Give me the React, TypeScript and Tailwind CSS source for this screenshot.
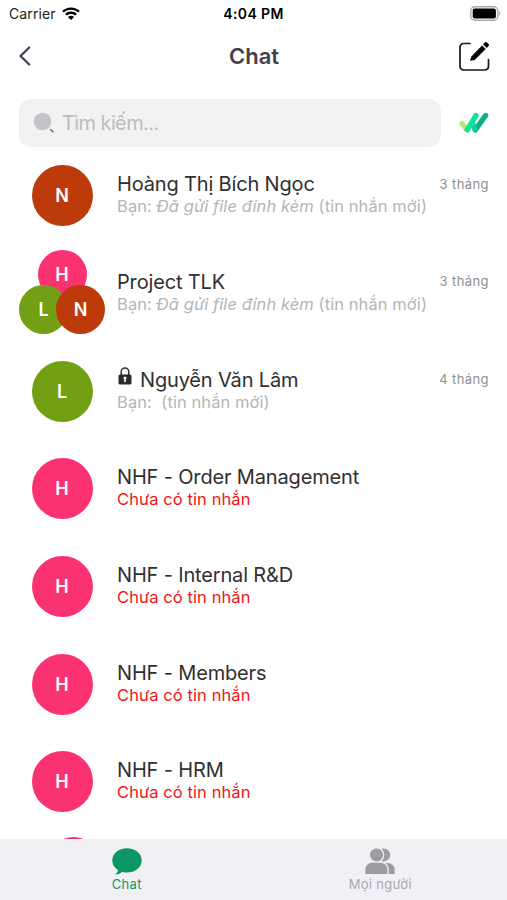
import type { ReactNode } from "react";
import clsx from "clsx";

type Conversation = {
	name: string;
	avatar: ReactNode;
	message?: ReactNode;
	time?: string;
	locked?: boolean;
};

const Avatar = ({ letter, color }: { letter: string; color: string }) => (
	<div
		className={clsx(
			"flex size-[61px] items-center justify-center rounded-full text-[18px] font-semibold text-white",
			color
		)}
	>
		{letter}
	</div>
);

const GroupAvatar = () => (
	<div className="flex w-[86px] flex-col items-center pb-[3px] text-[18px] font-semibold text-white">
		<div className="flex size-[49px] items-center justify-center rounded-full bg-[#fa3272]">
			H
		</div>
		<div className="-mt-[14px] flex">
			<div className="flex size-[49px] items-center justify-center rounded-full bg-[#739f14]">
				L
			</div>
			<div className="-ml-3 flex size-[49px] items-center justify-center rounded-full bg-[#bd3b0b]">
				N
			</div>
		</div>
	</div>
);

const fileMessage = (
	<>
		Bạn: <span className="italic">Đã gửi file đính kèm</span> (tin nhắn mới)
	</>
);

const pink = <Avatar letter="H" color="bg-[#fa3272]" />;

const conversations: Conversation[] = [
	{
		name: "Hoàng Thị Bích Ngọc",
		avatar: <Avatar letter="N" color="bg-[#bd3b0b]" />,
		message: fileMessage,
		time: "3 tháng",
	},
	{
		name: "Project TLK",
		avatar: <GroupAvatar />,
		message: fileMessage,
		time: "3 tháng",
	},
	{
		name: "Nguyễn Văn Lâm",
		avatar: <Avatar letter="L" color="bg-[#739f14]" />,
		message: <>Bạn:&nbsp; (tin nhắn mới)</>,
		time: "4 tháng",
		locked: true,
	},
	{ name: "NHF - Order Management", avatar: pink },
	{ name: "NHF - Internal R&D", avatar: pink },
	{ name: "NHF - Members", avatar: pink },
	{ name: "NHF - HRM", avatar: pink },
];

const LockIcon = () => (
	<svg viewBox="0 0 14 18" className="-mt-2 mr-2 ml-px h-[18px] w-[14px]">
		<path d="M3.2 8V4.8a3.8 3.8 0 0 1 7.6 0V8" fill="none" stroke="#333" strokeWidth="1.5" />
		<rect x="0.5" y="7.5" width="13" height="10" rx="1.5" fill="#2b2b2b" />
		<circle cx="7" cy="11" r="1.5" fill="#fff" />
		<path d="M6.4 11.5h1.2l.3 3.5H6.1z" fill="#fff" />
	</svg>
);

const StatusBar = () => (
	<div className="flex h-7 items-center justify-between pr-[6px] pl-[9px] text-black">
		<div className="flex w-32 items-center gap-[6px] pb-px text-[14px] tracking-[0.1px] text-[#222]">
			Carrier
			<svg viewBox="0 0 18 14" className="h-[14px] w-[18px]" fill="#000">
				<path d="M9 .4C5.6.4 2.5 1.7.2 3.9l1.7 1.7C3.8 3.8 6.3 2.8 9 2.8s5.2 1 7.1 2.8l1.7-1.7C15.5 1.7 12.4.4 9 .4z" />
				<path d="M9 4.6c-2.3 0-4.3.8-5.9 2.3l1.7 1.7C5.9 7.6 7.4 7 9 7s3.1.6 4.2 1.6l1.7-1.7C13.3 5.4 11.3 4.6 9 4.6z" />
				<path d="M9 8.8c-1.2 0-2.2.4-3 1.1l3 3.2 3-3.2c-.8-.7-1.8-1.1-3-1.1z" />
			</svg>
		</div>
		<div className="mr-[3px] pb-px text-[14px] font-semibold tracking-[0.4px]">4:04 PM</div>
		<div className="flex w-32 justify-end">
			<svg viewBox="0 0 31 15" className="mb-px h-[15px] w-[31px]">
				<rect x="0.8" y="0.8" width="27" height="13.4" rx="4" fill="#fff" stroke="#aaa" strokeWidth="1.4" />
				<rect x="2.7" y="2.6" width="23.2" height="9.8" rx="2" fill="#000" />
				<path d="M29.2 5.2c1.6.9 1.6 3.7 0 4.6z" fill="#aaa" />
			</svg>
		</div>
	</div>
);

const Header = () => (
	<header className="flex h-14 items-center justify-between pr-[17px] pl-[18px]">
		<svg viewBox="0 0 14 20" className="mr-[18px] h-5 w-[14px]" fill="none">
			<path d="M11.2 1.5 2.5 10l8.7 8.5" stroke="#43414f" strokeWidth="2.3" strokeLinecap="round" strokeLinejoin="round" />
		</svg>
		<h1 className="text-[22px] font-semibold text-[#43414f]">Chat</h1>
		<svg viewBox="0 0 32 32" className="h-8 w-8" fill="none">
			<path d="M12 3.5H5.500A3.500 3.500 0 0 0 2 7v19.500A3.500 3.500 0 0 0 5.500 30H27a3.500 3.500 0 0 0 3.500-3.500v-7" stroke="#171717" strokeWidth="1.7" strokeLinecap="round" />
			<path d="m12 20.800 1.400-4.300L24 5.400l3.700 3.700-11 10.800z" fill="#000" />
			<path d="m25 4.300 1.800-1.900c.7-.7 1.500-.7 2.200 0l1.500 1.500c.7.7.7 1.500 0 2.200L28.700 8z" fill="#000" />
		</svg>
	</header>
);

const SearchRow = () => (
	<div className="flex items-center gap-[18px] pt-[15px] pr-[17px] pl-[19px]">
		<div className="flex h-[48px] w-[422px] items-center gap-[7px] rounded-[12px] bg-[#f2f2f3] pl-[14px] text-[20px] tracking-[-0.6px] text-[#bdbdbf]">
			<svg viewBox="0 0 22 22" className="h-[22px] w-[22px]">
				<circle cx="9.5" cy="9.5" r="8.8" fill="#c4c5c9" />
				<path d="m17.3 17.3 3 3" stroke="#66676c" strokeWidth="1.5" />
			</svg>
			<span>Tìm kiếm...</span>
		</div>
		<svg viewBox="0 0 30 22" className="h-[22px] w-[30px]" fill="none" strokeWidth="5" strokeLinecap="round">
			<path d="m3 11.500 4.500 6" stroke="#b5ea70" />
			<path d="M16.300 17.800 26.600 3.500" stroke="#0cb187" strokeWidth="5.4" />
			<path d="m13.800 12 2 5" stroke="#0bd494" />
			<path d="M8.300 17.800 17 3.500" stroke="#12e39b" strokeWidth="5.4" />
		</svg>
	</div>
);

const ConversationRow = ({ item }: { item: Conversation }) => (
	<li className="flex h-[97.7px] shrink-0 items-center pr-[18px] pl-[19px]">
		<div className="flex w-[86px] shrink-0 justify-center">{item.avatar}</div>
		<div className="ml-3 flex min-w-0 flex-1 flex-col pb-[2px]">
			<div className="flex items-center justify-between">
				<div className="flex h-6 items-center text-[20px] tracking-[-0.16px] whitespace-nowrap text-[#303030]">
					{item.locked && <LockIcon />}
					{item.name}
				</div>
				{item.time && (
					<span className="text-[13px] tracking-[0.4px] text-[#8f8f8f]">{item.time}</span>
				)}
			</div>
			<div
				className={clsx(
					"h-[21px] text-[16.5px] leading-[21px] tracking-[0.08px] whitespace-nowrap",
					item.message ? "text-[#b5b5b5]" : "text-[#f01616]"
				)}
			>
				{item.message ?? "Chưa có tin nhắn"}
			</div>
		</div>
	</li>
);

const TabBar = () => (
	<nav className="flex h-[61px] shrink-0 bg-[#f0f0f5] text-[13px]">
		<div className="flex flex-1 flex-col items-center pt-[9px] text-[#139764]">
			<svg viewBox="0 0 30 27" className="h-[27px] w-[30px]" fill="#0b9763">
				<path d="M15 .3C6.8.3.3 5.6.3 12.4c0 4.1 2.2 7.5 5.8 9.7-.3 1.500-1.200 2.900-2.600 4.300 2.600 0 4.900-.8 6.500-2.500 1.600.4 3.300.6 5 .6 8.200 0 14.700-5.300 14.700-12.100S23.200.3 15 .3z" />
			</svg>
			<span className="mt-px leading-4 tracking-[0.3px]">Chat</span>
		</div>
		<div className="flex flex-1 flex-col items-center pt-[9px] text-[#a9a9ae]">
			<svg viewBox="0 0 30 27" className="h-[27px] w-[30px]" fill="#9d9da0">
				<circle cx="11.5" cy="7" r="6.5" />
				<path d="M16.5.7c5-.8 8.700 2.300 8.700 6.300s-3.700 7.100-8.700 6.300c3.600-3.200 3.600-9.400 0-12.600z" />
				<path d="M.3 26v-4.500c0-4.300 3.500-6.700 7.500-6.700H15c4 0 7.400 2.400 7.400 6.700V26z" />
				<path d="M20.5 15c5.500-.2 9.200 2.300 9.200 6.500V26h-6v-4.500c0-2.700-1.200-4.900-3.200-6.500z" />
			</svg>
			<span className="mt-px leading-4 tracking-[0.3px]">Mọi người</span>
		</div>
	</nav>
);

const App = () => {
	return (
		<div className="flex h-[900px] w-[507px] flex-col overflow-hidden bg-white font-['Inter','Liberation_Sans',sans-serif]">
			<StatusBar />
			<Header />
			<SearchRow />
			<ul className="flex min-h-0 flex-1 flex-col overflow-hidden">
				{conversations.map((item) => (
					<ConversationRow key={item.name} item={item} />
				))}
				{/* next group conversation, peeking above the tab bar */}
				<li className="shrink-0 pt-[6px] pl-[49px]">
					<div className="size-[49px] rounded-full bg-[#e03a75]" />
				</li>
			</ul>
			<TabBar />
		</div>
	);
};

export default App;
